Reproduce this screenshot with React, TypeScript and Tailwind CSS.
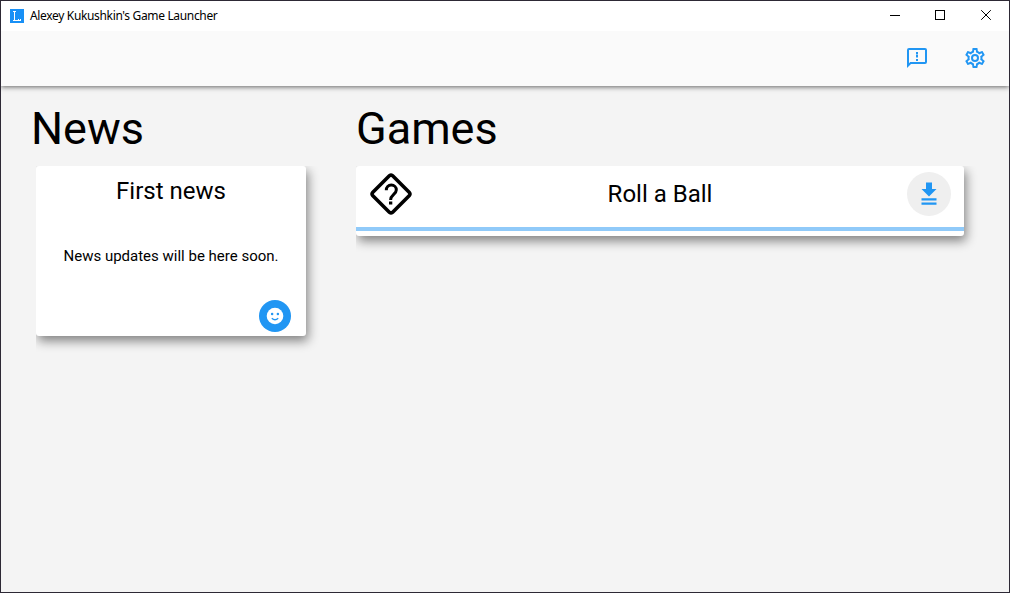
import React from "react";

const COG =
  "M12,8A4,4 0 0,1 16,12A4,4 0 0,1 12,16A4,4 0 0,1 8,12A4,4 0 0,1 12,8M12,10A2,2 0 0,0 10,12A2,2 0 0,0 12,14A2,2 0 0,0 14,12A2,2 0 0,0 12,10M10,22C9.75,22 9.54,21.82 9.5,21.58L9.13,18.93C8.5,18.68 7.96,18.34 7.44,17.94L4.95,18.95C4.73,19.03 4.46,18.95 4.34,18.73L2.34,15.27C2.21,15.05 2.27,14.78 2.46,14.63L4.57,12.97L4.5,12L4.57,11L2.46,9.37C2.27,9.22 2.21,8.95 2.34,8.73L4.34,5.27C4.46,5.05 4.73,4.96 4.95,5.05L7.44,6.05C7.96,5.66 8.5,5.32 9.13,5.07L9.5,2.42C9.54,2.18 9.75,2 10,2H14C14.25,2 14.46,2.18 14.5,2.42L14.87,5.07C15.5,5.32 16.04,5.66 16.56,6.05L19.05,5.05C19.27,4.96 19.54,5.05 19.66,5.27L21.66,8.73C21.79,8.95 21.73,9.22 21.54,9.37L19.43,11L19.5,12L19.43,13L21.54,14.63C21.73,14.78 21.79,15.05 21.66,15.27L19.66,18.73C19.54,18.95 19.27,19.04 19.05,18.95L16.56,17.95C16.04,18.34 15.5,18.68 14.87,18.93L14.5,21.58C14.46,21.82 14.25,22 14,22H10M11.25,4L10.88,6.61C9.68,6.86 8.62,7.5 7.85,8.39L5.44,7.35L4.69,8.65L6.8,10.2C6.4,11.37 6.4,12.64 6.8,13.8L4.68,15.36L5.43,16.66L7.86,15.62C8.63,16.5 9.68,17.14 10.87,17.38L11.24,20H12.76L13.13,17.39C14.32,17.14 15.37,16.5 16.14,15.62L18.57,16.66L19.32,15.36L17.2,13.81C17.6,12.64 17.6,11.37 17.2,10.2L19.31,8.65L18.56,7.35L16.15,8.39C15.38,7.5 14.32,6.86 13.12,6.62L12.75,4H11.25Z";
const MESSAGE =
  "M13,8.5H11V6H13V8.5M13,11.5H11V9H13V11.5M13,15H11V13H13V15M22,4V16A2,2 0 0,1 20,18H6L2,22V4A2,2 0 0,1 4,2H20A2,2 0 0,1 22,4M20,4H4V17.2L5.2,16H20V4Z";

function TitleBar() {
  return (
    <header className="relative z-20 flex h-[30px] items-center bg-white pl-[9px] font-['Noto_Sans','Open_Sans',sans-serif]">
      <svg className="h-3.5 w-3.5" viewBox="0 0 14 14" shapeRendering="crispEdges">
        <path fill="#1890f6" d="M0 0h14v14H0z" />
        <path fill="#fff" d="M3 2h3v1H3zM4 2h1v9H4zM3 11h8v1H3zM8 10h1v1H8zM10 10h1v1h-1z" />
      </svg>
      <h1 className="ml-1.5 text-[12px] tracking-[-0.34px] whitespace-nowrap text-black">
        Alexey Kukushkin's Game Launcher
      </h1>
      <svg className="mr-[-1px] ml-auto h-[30px] w-[138px]" viewBox="0 0 138 30" fill="none" stroke="#000" strokeWidth="1">
        <path d="M18 14.5h10M63.5 9.5h9v9h-9z" shapeRendering="crispEdges" />
        <path d="M109.2 9.2l9.6 9.6M118.8 9.2l-9.6 9.6" />
      </svg>
    </header>
  );
}

function Toolbar() {
  return (
    <nav className="relative z-10 flex h-[55px] items-center justify-end gap-[34px] bg-[#fafafa] pr-[22px] pb-px text-[#2196f3] shadow-[0_1px_5px_rgba(0,0,0,0.6)]">
      <button className="h-6 w-6"><svg viewBox="0 0 24 24" fill="currentColor"><path d={MESSAGE} /></svg></button>
      <button className="h-6 w-6"><svg viewBox="0 0 24 24" fill="currentColor"><path d={COG} /></svg></button>
    </nav>
  );
}

function NewsCard() {
  return (
    <div className="ml-1 h-[190px] w-[290px] overflow-hidden">
      <article className="flex h-[170px] w-[270px] flex-col items-center rounded-[3px] bg-white shadow-[2px_5px_11px_rgba(0,0,0,0.47)]">
        <h3 className="mt-2 text-[24px] leading-[34px]">First news</h3>
        <p className="mt-[37px] text-[15px] leading-[22px]">News updates will be here soon.</p>
        <button className="mt-auto mr-[15px] mb-1 flex h-8 w-8 items-center justify-center self-end rounded-full bg-[#2196f3]">
          <svg className="h-5 w-5" viewBox="0 0 20 20">
            <circle cx="10" cy="10" r="8.3" fill="#fff" />
            <circle cx="7.1" cy="8" r="1.25" fill="#2196f3" />
            <circle cx="12.9" cy="8" r="1.25" fill="#2196f3" />
            <path d="M6.8 12.2q3.2 3 6.4 0" fill="none" stroke="#2196f3" strokeWidth="1.4" />
          </svg>
        </button>
      </article>
    </div>
  );
}

function GameCard() {
  return (
    <div className="h-[90px] w-[625px] overflow-hidden">
      <article className="h-[70px] w-[608px] rounded-[3px] bg-white shadow-[2px_5px_11px_rgba(0,0,0,0.47)]">
        <div className="flex h-[61px] items-center pr-[13px] pb-[5px] pl-[14px]">
          <svg className="h-[42px] w-[42px] shrink-0" viewBox="0 0 42 42" fill="none" stroke="#000">
            <path d="M19.6 2.6Q21 1.5 22.4 2.6L39.4 19.6Q40.5 21 39.4 22.4L22.4 39.4Q21 40.5 19.6 39.4L2.6 22.4Q1.5 21 2.6 19.6Z" strokeWidth="3.6" strokeLinejoin="round" />
            <path d="M16.3 17.2c0-3 2-5.1 5-5.1s5 2.1 5 4.8c0 4.3-5.7 4.7-5.7 10.1" strokeWidth="3" />
            <path d="M19 30h3.3" strokeWidth="3" />
          </svg>
          <h3 className="flex-1 pl-px text-center text-[24px] leading-[34px]">Roll a Ball</h3>
          <button className="flex h-11 w-11 items-center justify-center rounded-full bg-[#efefef]">
            <svg className="h-6 w-4" viewBox="0 0 16 24" fill="#2196f3">
              <path d="M5 .5h6V7h4.5L8 14.4L.5 7H5zM.5 16.2h15v2.2H.5zM.5 20.6h15v2.2H.5z" />
            </svg>
          </button>
        </div>
        <div className="h-1 bg-[#90caf9]" />
      </article>
    </div>
  );
}

export default function App() {
  return (
    <div className="flex h-[593px] w-[1010px] flex-col overflow-hidden border border-[#2d2935] bg-[#f4f4f4] font-['Roboto',sans-serif] text-black">
      <TitleBar />
      <Toolbar />
      <main className="flex flex-1 pl-[31px]">
        <section className="w-[324px]">
          <h2 className="mt-[13px] mb-[7px] ml-[-1px] text-[45px] leading-[60px]">News</h2>
          <NewsCard />
        </section>
        <section>
          <h2 className="mt-[13px] mb-[7px] text-[45px] leading-[60px]">Games</h2>
          <GameCard />
        </section>
      </main>
    </div>
  );
}
